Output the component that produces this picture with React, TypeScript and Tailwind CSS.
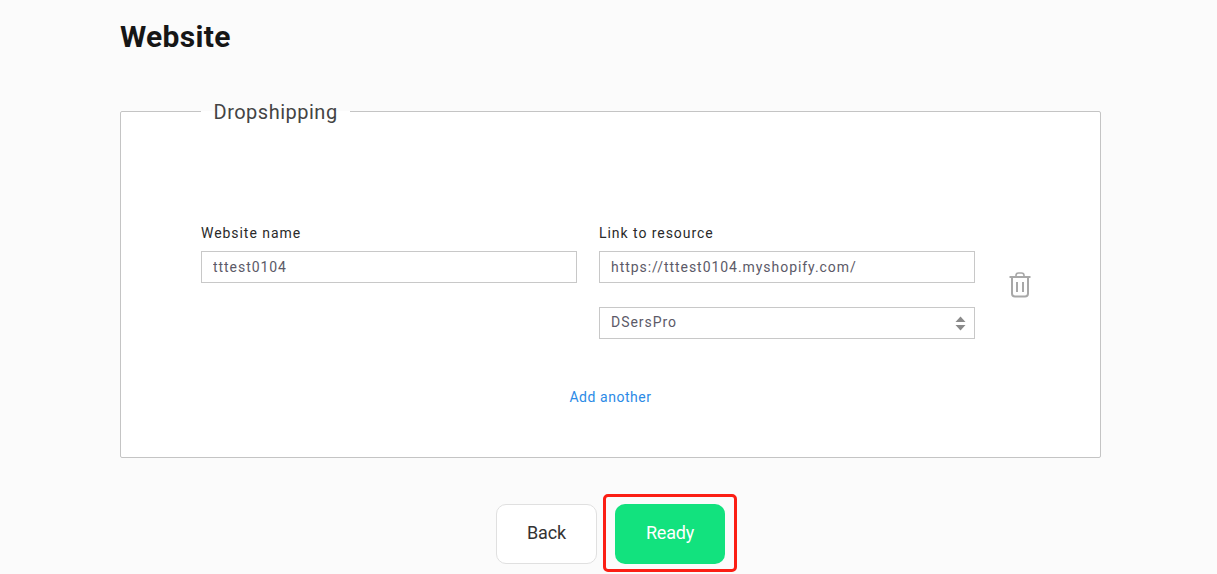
import React from 'react';

const TrashIcon: React.FC = () => (
  <svg width="22" height="26" viewBox="0 0 22 26" fill="none" stroke="#a8a8a8" strokeWidth="2">
    <path d="M0.5 5h21" />
    <path d="M7 5V3.5C7 2 8 1 9.500 1h3C14 1 15 2 15 3.500V5" strokeWidth="1.600" />
    <path d="M3 5v16.500C3 23.500 4 24.500 6 24.500h10c2 0 3-1 3-3V5" />
    <path d="M8 10v10M14 10v10" />
  </svg>
);

const inputClass =
  'w-full h-8 border border-[#c8c8c8] bg-white px-[11px] text-sm tracking-[0.95px] text-[#5c5a68] outline-none';

const App: React.FC = () => {
  return (
    <div className="relative h-[574px] w-full overflow-hidden bg-[#fbfbfb] px-[120px] font-['Roboto',sans-serif]">
      <div className="h-[98px] pt-[17px]">
        <h1 className="text-[30px] leading-[40px] font-bold tracking-[0.3px] text-[#161616]">Website</h1>
      </div>

      <fieldset className="h-[360px] w-[981px] rounded-[2px] border border-[#c4c4c4] bg-white">
        <legend className="ml-[80px] px-[12.5px] pt-[2px] text-xl leading-6 tracking-[0.5px] text-[#444444]">Dropshipping</legend>

        <div className="flex pt-[100px] pl-[80px]">
          <div className="w-[376px]">
            <label className="block text-sm leading-[18px] tracking-[0.95px] text-[#2a2a2a]">Website name</label>
            <input className={`${inputClass} mt-[9px]`} defaultValue="tttest0104" />
          </div>

          <div className="ml-[22px] w-[376px]">
            <label className="block text-sm leading-[18px] tracking-[0.95px] text-[#2a2a2a]">Link to resource</label>
            <input className={`${inputClass} mt-[9px]`} defaultValue="https://tttest0104.myshopify.com/" />
            <div className="relative mt-6">
              <select className={`${inputClass} appearance-none pb-[2px]`} defaultValue="DSersPro">
                <option>DSersPro</option>
              </select>
              <svg className="absolute top-[9px] right-[9px]" width="11" height="15" viewBox="0 0 11 15" fill="#8a8a8a">
                <path d="M5.500 0.500L10.500 6H0.500z" />
                <path d="M5.500 14.500L0.500 9H10.500z" />
              </svg>
            </div>
          </div>

          <div className="mt-[48px] ml-[34px]">
            <TrashIcon />
          </div>
        </div>

        <div className="mt-[46px] text-center">
          <a className="text-sm leading-[18px] tracking-[0.55px] text-[#2b8ae6]">Add another</a>
        </div>
      </fieldset>

      <div className="mt-[46px] flex w-[981px] justify-center gap-[18px]">
        <button className="h-[60px] w-[101px] rounded-[10px] border border-[#e0e0e0] bg-white pb-[2px] text-lg tracking-[-0.2px] text-[#333333]">
          Back
        </button>
        <button className="h-[60px] w-[110px] rounded-[10px] bg-[#12e27e] pb-[2px] text-lg tracking-[-0.2px] text-white">Ready</button>
      </div>

      {/* annotation drawn over the screenshot */}
      <div className="absolute top-[494px] left-[603px] h-[78px] w-[134px] rounded-[5px] border-[3px] border-[#fb1e14]" />
    </div>
  );
};

export default App;
